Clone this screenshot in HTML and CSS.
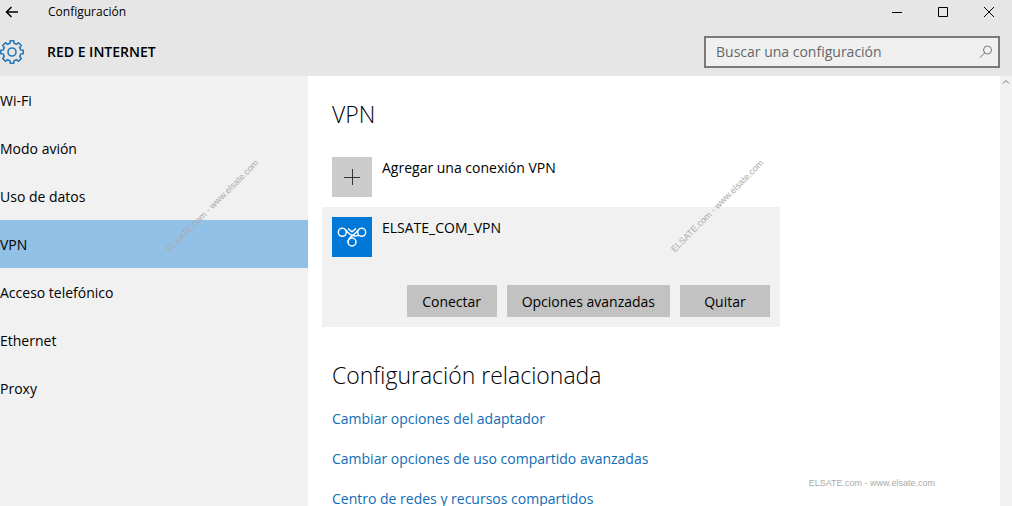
FILE: index.html
```html
<!DOCTYPE html>
<html lang="es">
<head>
  <meta charset="UTF-8">
  <title>Configuración</title>
  <meta name="viewport" content="width=device-width, initial-scale=1">
  <link rel="stylesheet" href="styles.css">
</head>
<body>
  <header class="top">
    <!-- Barra de titulo -->
    <div class="titlebar">
      <button class="back" type="button" aria-label="Atrás">
        <svg width="14" height="14" viewBox="0 0 14 14"><path d="M13 7H1.500M6.500 2L1.500 7l5 5"/></svg>
      </button>
      <span class="title">Configuración</span>
      <div class="controls">
        <button type="button" aria-label="Minimizar">
          <svg width="12" height="12" viewBox="0 0 12 12"><path d="M1 6.500h10"/></svg>
        </button>
        <button type="button" aria-label="Maximizar">
          <svg width="12" height="12" viewBox="0 0 12 12"><path d="M1.500 1.500h9v9h-9z"/></svg>
        </button>
        <button type="button" aria-label="Cerrar">
          <svg width="12" height="12" viewBox="0 0 12 12"><path d="M1 1l10 10M11 1L1 11"/></svg>
        </button>
      </div>
    </div>

    <!-- Seccion y buscador -->
    <div class="section">
      <svg class="gear" width="24" height="24" viewBox="0 0 24 24">
        <path d="M10.200 .8L10 3.300L7.500 4.300L5.500 2.700L2.700 5.500L4.300 7.500L3.300 10L.8 10.200V13.800L3.300 14L4.300 16.500L2.700 18.500L5.500 21.300L7.500 19.700L10 20.700L10.200 23.200H13.800L14 20.700L16.500 19.700L18.500 21.300L21.300 18.500L19.700 16.500L20.700 14L23.200 13.800V10.200L20.700 10L19.700 7.500L21.300 5.500L18.500 2.700L16.500 4.300L14 3.300L13.800 .8z"/>
        <circle cx="12" cy="12" r="4"/>
      </svg>
      <h1>RED E INTERNET</h1>
      <form class="search">
        <input type="text" id="buscar" aria-label="Buscar una configuración" placeholder="Buscar una configuración">
        <button type="button" aria-label="Buscar">
          <svg width="14" height="14" viewBox="0 0 14 14"><circle cx="8.500" cy="5" r="4"/><path d="M5.700 7.900L1 12.600"/></svg>
        </button>
      </form>
    </div>
  </header>

  <div class="page">
    <nav class="menu">
      <a href="#wifi">Wi-Fi</a>
      <a href="#avion">Modo avión</a>
      <a href="#datos">Uso de datos</a>
      <a href="#vpn" class="active">VPN</a>
      <a href="#telefono">Acceso telefónico</a>
      <a href="#ethernet">Ethernet</a>
      <a href="#proxy">Proxy</a>
    </nav>

    <main class="content">
      <h2>VPN</h2>
      <button class="add" type="button">
        <span class="tile">
          <svg width="18" height="18" viewBox="0 0 18 18"><path d="M1 9.500h16M9.500 1v16"/></svg>
        </span>
        <span class="name">Agregar una conexión VPN</span>
      </button>

      <div class="card">
        <div class="connection">
          <span class="tile blue">
            <svg width="30" height="22" viewBox="0 0 30 22">
              <circle cx="5.300" cy="6.300" r="4"/>
              <circle cx="24.700" cy="6.300" r="4"/>
              <circle cx="15" cy="16" r="4"/>
              <path d="M11 2.500L15 5.800L19 2.500"/>
              <path d="M8.300 3.800L12 7.500C14.500 9.800 18 10.500 22 9.200"/>
              <path d="M21.700 3.800L18 7.500C16 9.500 11.500 10.800 11 16"/>
            </svg>
          </span>
          <span class="name">ELSATE_COM_VPN</span>
        </div>
        <div class="actions">
          <button type="button">Conectar</button>
          <button type="button">Opciones avanzadas</button>
          <button type="button">Quitar</button>
        </div>
      </div>

      <h2>Configuración relacionada</h2>
      <div class="links">
        <a href="#adaptador">Cambiar opciones del adaptador</a>
        <a href="#compartido">Cambiar opciones de uso compartido avanzadas</a>
        <a href="#centro">Centro de redes y recursos compartidos</a>
      </div>
    </main>

    <div class="scroll">
      <svg width="8" height="6" viewBox="0 0 8 6"><path d="M1 4.500l3-3 3 3"/></svg>
    </div>

    <!-- Marcas de agua -->
    <span class="mark mark-left">ELSATE.com - www.elsate.com</span>
    <span class="mark mark-center">ELSATE.com - www.elsate.com</span>
    <span class="mark mark-bottom">ELSATE.com - www.elsate.com</span>
  </div>
</body>
</html>
```
FILE: styles.css
```css
* {
  box-sizing: border-box;
}

body {
  margin: 0;
  height: 100vh;
  display: flex;
  flex-direction: column;
  overflow: hidden;
  background: #fff;
  color: #000;
  font-family: "Open Sans", "Noto Sans", sans-serif;
  font-size: 14px;
  line-height: 22px;
}

h1, h2 {
  margin: 0;
}

a {
  text-decoration: none;
}

button {
  margin: 0;
  padding: 0;
  border: none;
  background: none;
  color: inherit;
  font: inherit;
}

svg {
  display: block;
  fill: none;
  stroke: #000;
}

/* Cabecera */
.top {
  background: #e6e6e6;
}

.titlebar {
  display: flex;
  align-items: center;
  height: 24px;
}

.back {
  width: 48px;
  padding-left: 5px;
}

.back svg {
  stroke-width: 1.5;
}

.title {
  font-size: 12px;
}

.controls {
  display: flex;
  margin-left: auto;
}

.controls button {
  display: flex;
  justify-content: center;
  width: 46px;
}

.section {
  display: flex;
  align-items: center;
  padding: 12px 12px 8px 0;
}

.gear {
  stroke: #2878b8;
  stroke-width: 1.6;
  stroke-linejoin: round;
}

.section h1 {
  margin-left: 23px;
  font-size: 14px;
  font-weight: 600;
}

.search {
  display: flex;
  align-items: center;
  width: 296px;
  height: 32px;
  margin-left: auto;
  padding: 0 5px 0 10px;
  border: 2px solid #7a7a7a;
  background: #f0f0f0;
}

.search input {
  flex: 1;
  min-width: 0;
  padding: 0;
  border: none;
  outline: none;
  background: none;
  font: inherit;
}

.search input::placeholder {
  color: #666;
  opacity: 1;
}

.search svg {
  stroke: #777;
}

/* Cuerpo */
.page {
  position: relative;
  display: flex;
  flex: 1;
  min-height: 0;
}

.menu {
  width: 308px;
  background: #f1f1f1;
}

.menu a {
  display: block;
  height: 48px;
  color: #000;
  line-height: 50px;
}

.menu .active {
  background: #91c1e7;
}

.content {
  flex: 1;
  padding: 22px 24px 0;
  overflow: hidden;
}

.content h2 {
  font-size: 23px;
  font-weight: 300;
  line-height: 32px;
}

.add,
.connection {
  display: flex;
  gap: 10px;
  text-align: left;
}

.add {
  margin-top: 27px;
}

.tile {
  display: flex;
  align-items: center;
  justify-content: center;
  width: 40px;
  height: 40px;
  background: #ccc;
}

.tile svg {
  stroke: #333;
}

.tile.blue {
  background: #0078d7;
}

.tile.blue svg {
  stroke: #fff;
  stroke-width: 1.5;
}

.card {
  max-width: 458px;
  margin: 10px 0 32px -10px;
  padding: 10px;
  background: #f1f1f1;
}

.actions {
  display: flex;
  justify-content: flex-end;
  gap: 10px;
  margin-top: 28px;
}

.actions button {
  min-width: 90px;
  height: 32px;
  padding: 1px 15px 0;
  background: #c2c2c2;
}

.links {
  display: flex;
  flex-direction: column;
  align-items: flex-start;
  gap: 18px;
  margin-top: 17px;
}

.links a {
  color: #0f6cb5;
}

.scroll {
  display: flex;
  justify-content: center;
  width: 12px;
  padding-top: 3px;
  background: #f1f1f1;
}

.scroll svg {
  stroke: #777;
}

/* Marcas de agua sobre la pagina */
.mark {
  position: absolute;
  color: #aaa;
  font-family: "Liberation Sans", Arial, sans-serif;
  font-size: 9px;
  line-height: 12px;
  white-space: nowrap;
  pointer-events: none;
}

.mark-left,
.mark-center {
  top: 124px;
  transform: rotate(-45deg);
}

.mark-left {
  left: 149px;
}

.mark-center {
  left: 654px;
}

.mark-bottom {
  right: 77px;
  bottom: 17px;
}
```
